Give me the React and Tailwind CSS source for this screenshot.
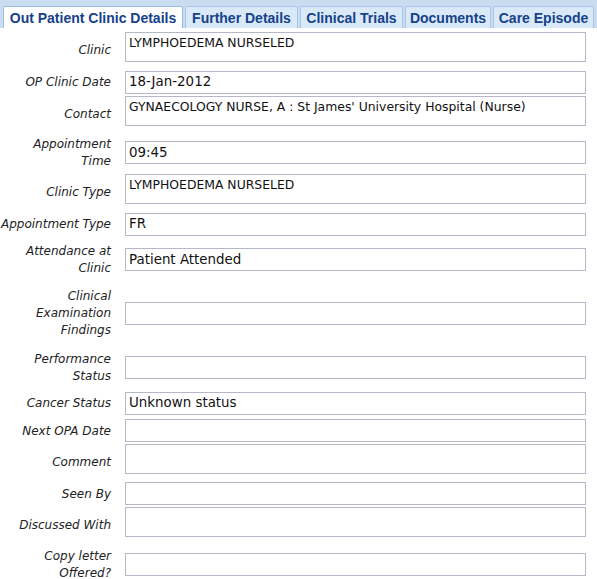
import React from 'react';

const tabs = [
    { label: 'Out Patient Clinic Details', w: 'w-[180px]', active: true },
    { label: 'Further Details', w: 'w-[113px]' },
    { label: 'Clinical Trials', w: 'w-[103px]' },
    { label: 'Documents', w: 'w-[86px]' },
    { label: 'Care Episode', w: 'w-[101px]' },
];

const rows = [
    { label: ['Clinic'], value: 'LYMPHOEDEMA NURSELED', area: true, h: 'h-[36px]' },
    { label: ['OP Clinic Date'], value: '18-Jan-2012', h: 'h-[28px]' },
    { label: ['Contact'], value: "GYNAECOLOGY NURSE, A : St James' University Hospital (Nurse)", area: true, h: 'h-[36px]' },
    { label: ['Appointment', 'Time'], value: '09:45', h: 'h-[41px]' },
    { label: ['Clinic Type'], value: 'LYMPHOEDEMA NURSELED', area: true, h: 'h-[37px]' },
    { label: ['Appointment Type'], value: 'FR', h: 'h-[28px]' },
    { label: ['Attendance at', 'Clinic'], value: 'Patient Attended', h: 'h-[43px]' },
    { label: ['Clinical', 'Examination', 'Findings'], value: '', h: 'h-[64px]' },
    { label: ['Performance', 'Status'], value: '', h: 'h-[44px]' },
    { label: ['Cancer Status'], value: 'Unknown status', h: 'h-[28px]' },
    { label: ['Next OPA Date'], value: '', h: 'h-[27px]' },
    { label: ['Comment'], value: '', area: true, h: 'h-[36px]' },
    { label: ['Seen By'], value: '', h: 'h-[27px]' },
    { label: ['Discussed With'], value: '', area: true, h: 'h-[36px]' },
    { label: ['Copy letter', 'Offered?'], value: '', h: 'h-[42px]' },
];

const Field = ({ value, area }) => {
    if (area) {
        return (
            <div className="pb-[6px]">
                <div className="w-[461px] h-[30px] border border-[#b5b8c8] bg-white px-[3px] pt-[3px] text-[12.4px] leading-[14px] text-[#111] whitespace-nowrap overflow-hidden">
                    {value}
                </div>
            </div>
        );
    }
    return (
        <div className="w-[461px] h-[23px] border border-[#b5b8c8] bg-white px-[3px] pt-[1px] flex items-center text-[13.4px] text-[#111] whitespace-nowrap overflow-hidden">
            {value}
        </div>
    );
};

const App = () => {
    return (
        <div className="w-[597px] h-[579px] overflow-hidden bg-white" style={{ fontFamily: '"DejaVu Sans", Verdana, sans-serif' }}>
            <div className="h-[28px] bg-[#c9dcf0] flex items-end gap-[2px] pl-[3px]">
                {tabs.map((t) => (
                    <div
                        key={t.label}
                        className={`${t.w} h-[22px] border border-b-0 rounded-t-[2px] text-center text-[14px] font-bold leading-[23px] text-[#15428b] ${t.active ? 'bg-white border-[#99bbe8]' : 'bg-[#dae9f7] border-[#a9c6ea]'}`}
                        style={{ fontFamily: '"Liberation Sans", Arial, sans-serif' }}
                    >
                        {t.label}
                    </div>
                ))}
            </div>

            <div className="pt-[4px] flex flex-col">
                {rows.map((r) => (
                    <div key={r.label.join(' ')} className={`flex items-center ${r.h}`}>
                        <div className="w-[111px] pt-[1px] text-right italic text-[12px] leading-[17px] text-[#222]">
                            {r.label.map((l) => (
                                <div key={l}>{l}</div>
                            ))}
                        </div>
                        <div className="ml-[14px]">
                            <Field value={r.value} area={r.area} />
                        </div>
                    </div>
                ))}
            </div>
        </div>
    );
};

export default App;
